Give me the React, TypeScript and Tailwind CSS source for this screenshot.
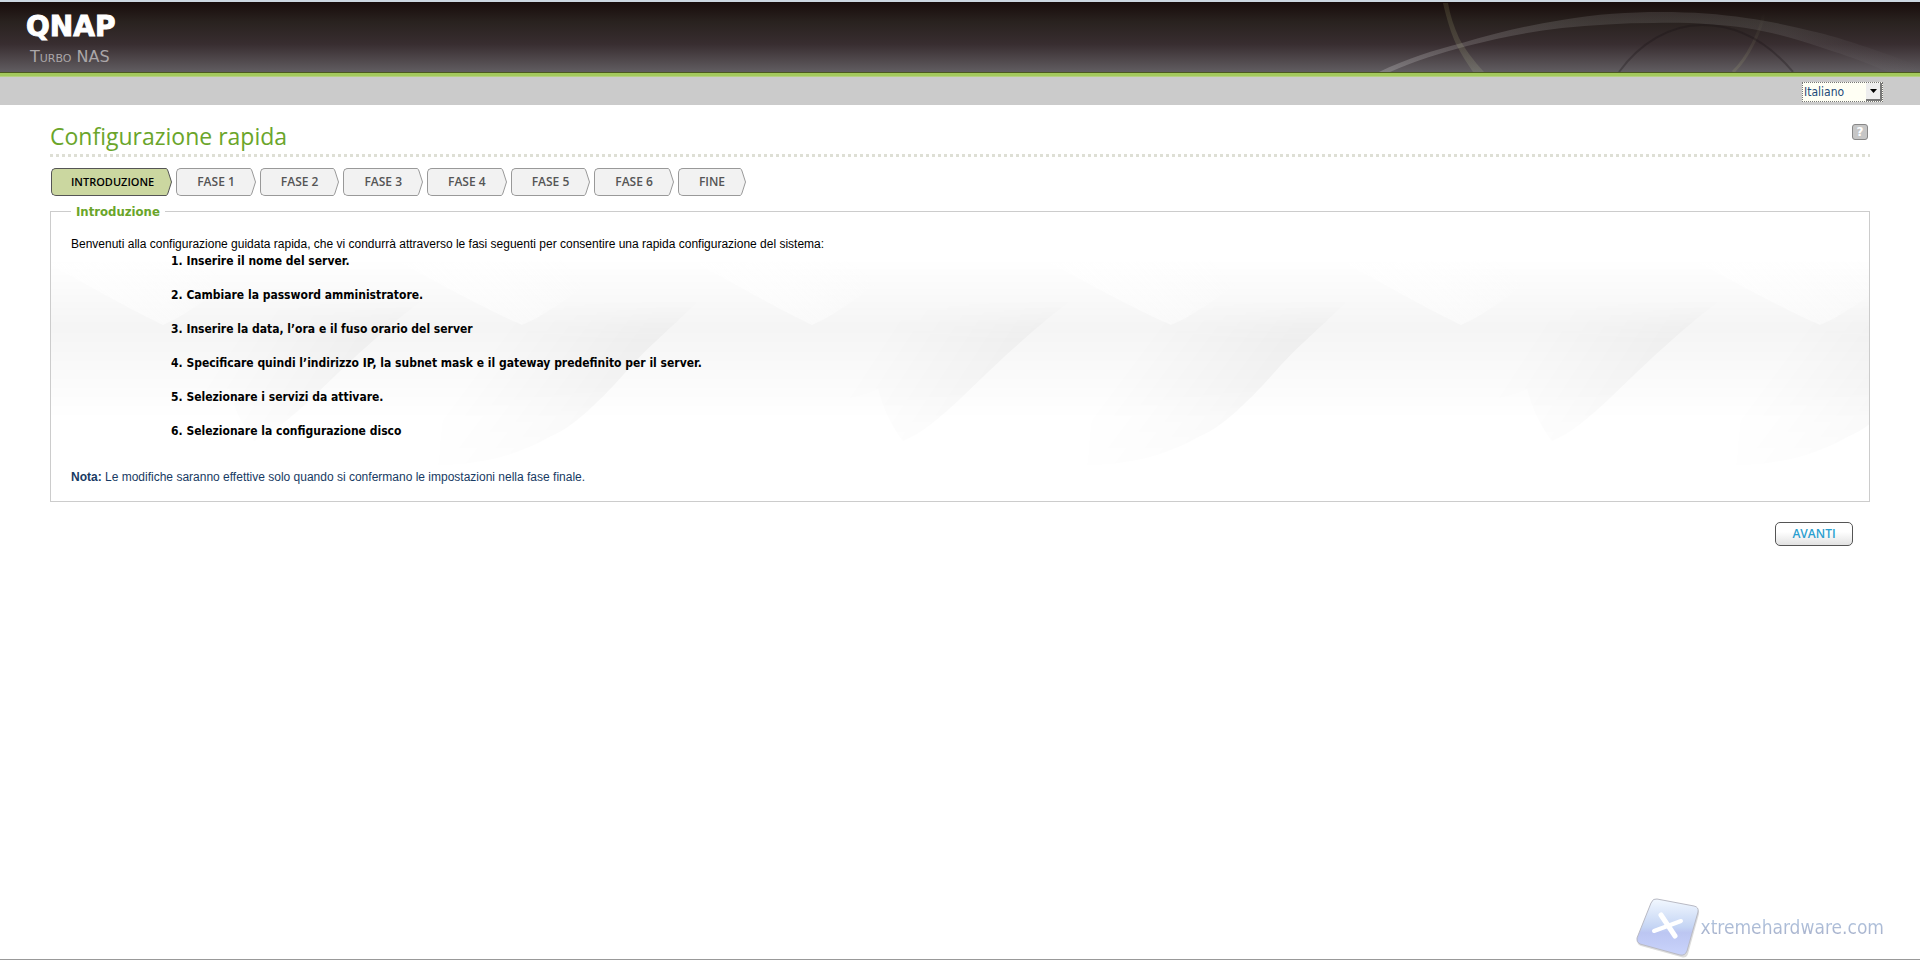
import { clsx } from 'clsx';

type Step = {
  id: string;
  label: string;
};

const steps: Step[] = [
  { id: 'intro', label: 'INTRODUZIONE' },
  { id: 'step-1', label: 'FASE 1' },
  { id: 'step-2', label: 'FASE 2' },
  { id: 'step-3', label: 'FASE 3' },
  { id: 'step-4', label: 'FASE 4' },
  { id: 'step-5', label: 'FASE 5' },
  { id: 'step-6', label: 'FASE 6' },
  { id: 'finish', label: 'FINE' },
];

const tasks = [
  'Inserire il nome del server.',
  'Cambiare la password amministratore.',
  'Inserire la data, l’ora e il fuso orario del server',
  'Specificare quindi l’indirizzo IP, la subnet mask e il gateway predefinito per il server.',
  'Selezionare i servizi da attivare.',
  'Selezionare la configurazione disco',
];

function HeaderArcs() {
  return (
    <svg className="absolute top-0 right-0 h-[70px] w-[580px]" viewBox="0 2 580 70" aria-hidden="true">
      <defs>
        <linearGradient id="arc" x1="0" x2="1" y1="0" y2="0">
          <stop offset="0" stopColor="#fff" stopOpacity="0.2" />
          <stop offset="0.4" stopColor="#bbb" stopOpacity="0.15" />
          <stop offset="0.75" stopColor="#aaa" stopOpacity="0.15" />
          <stop offset="1" stopColor="#999" stopOpacity="0" />
        </linearGradient>
        <linearGradient id="olive" x1="0" x2="0" y1="0" y2="1">
          <stop offset="0" stopColor="#8a8458" stopOpacity="0.22" />
          <stop offset="1" stopColor="#a8b090" stopOpacity="0.22" />
        </linearGradient>
        <linearGradient id="olive-thin" x1="0" x2="0" y1="0" y2="1">
          <stop offset="0" stopColor="#a8a878" stopOpacity="0" />
          <stop offset="1" stopColor="#a8a878" stopOpacity="0.2" />
        </linearGradient>
      </defs>
      <path
        d="M39 72 C66 59 94 50 122 43 C156 33 188 25 222 20 C256 14 290 12 321 12 C352 12 380 14 406 18 C435 22 455 27 480 33 C507 40 530 48 580 66 L580 84 C560 77 548 72 536 67 C515 58 498 53 480 47 C455 39 432 32 406 28 C378 24 345 22 314 23 C282 23 252 25 222 28 C188 32 158 38 127 46 C100 53 75 61 50 72 Z"
        fill="url(#arc)"
      />
      <path d="M103 3 C107 20 111 33 116 44 C121 54 127 63 133 72 L144 72 C133 60 125 49 119 38 C114 27 110 15 108 3 Z" fill="url(#olive)" />
      <path d="M424 13 C421 30 408 58 393 72" fill="none" stroke="url(#olive-thin)" strokeWidth="3" />
      <path d="M279 72 C300 43 330 25 362 25 C397 25 428 42 453 72" fill="none" stroke="#181014" strokeOpacity="0.3" strokeWidth="2" />
    </svg>
  );
}

function WaveBackground() {
  return (
    <svg className="absolute inset-0 h-full w-full" aria-hidden="true">
      <defs>
        <linearGradient id="band" x1="0" x2="0" y1="40" y2="200" gradientUnits="userSpaceOnUse">
          <stop offset="0" stopColor="#000" stopOpacity="0" />
          <stop offset="0.42" stopColor="#000" stopOpacity="0.04" />
          <stop offset="0.6" stopColor="#000" stopOpacity="0.028" />
          <stop offset="1" stopColor="#000" stopOpacity="0" />
        </linearGradient>
        <linearGradient id="notch" x1="0" x2="1" y1="0.3" y2="0">
          <stop offset="0" stopColor="#fff" stopOpacity="0.6" />
          <stop offset="0.4" stopColor="#fff" stopOpacity="0.45" />
          <stop offset="0.75" stopColor="#fff" stopOpacity="0" />
        </linearGradient>
        <linearGradient id="sweep-left" x1="180" x2="310" y1="90" y2="175" gradientUnits="userSpaceOnUse">
          <stop offset="0.1" stopColor="#000" stopOpacity="0" />
          <stop offset="0.9" stopColor="#000" stopOpacity="0.03" />
        </linearGradient>
        <linearGradient id="sweep-right" x1="440" x2="560" y1="100" y2="190" gradientUnits="userSpaceOnUse">
          <stop offset="0.1" stopColor="#000" stopOpacity="0" />
          <stop offset="0.9" stopColor="#000" stopOpacity="0.032" />
        </linearGradient>
        <linearGradient id="fade" x1="0" x2="0" y1="80" y2="250" gradientUnits="userSpaceOnUse">
          <stop offset="0" stopColor="#000" />
          <stop offset="0.25" stopColor="#fff" />
          <stop offset="0.5" stopColor="#fff" />
          <stop offset="1" stopColor="#555" />
        </linearGradient>
        <mask id="sweep-mask" maskUnits="userSpaceOnUse" x="0" y="0" width="649" height="282">
          <rect width="649" height="282" fill="url(#fade)" />
        </mask>
        <pattern id="waves" width="649" height="282" patternUnits="userSpaceOnUse">
          <rect y="40" width="649" height="160" fill="url(#band)" />
          <path d="M-4 44 C30 62 75 88 112 106 C140 94 175 66 210 40 Z" fill="url(#notch)" />
          <path d="M350 44 C388 64 430 88 471 106 C500 94 535 66 570 40 Z" fill="url(#notch)" />
          <g mask="url(#sweep-mask)">
            <path d="M90 80 L373 80 C330 112 300 142 263 177 C240 199 222 214 203 222 C190 205 184 190 178 170 C155 180 130 184 101 186 Z" fill="url(#sweep-left)" />
            <path d="M400 80 L649 80 C630 100 600 125 580 147 C560 170 525 208 500 217 C467 236 430 246 387 246 C390 226 395 160 400 80 Z" fill="url(#sweep-right)" />
          </g>
        </pattern>
      </defs>
      <rect width="100%" height="100%" fill="url(#waves)" />
    </svg>
  );
}

function StepTab({ step, active }: { step: Step; active: boolean }) {
  return (
    <button
      type="button"
      aria-current={active ? 'step' : undefined}
      className={clsx(
        "flex h-7 font-['Open_Sans',sans-serif] font-semibold",
        active ? 'text-[11px] text-black' : 'text-xs text-[#555]',
      )}
    >
      <span
        className={clsx(
          'flex h-7 items-center rounded-l-[5px] border-y border-l',
          active ? 'border-[#555] bg-[#cbd7a0] pr-3 pl-[19px]' : 'border-[#999] bg-[#f2f2f2] pr-[15px] pl-5',
        )}
      >
        {step.label}
      </span>
      <svg className="h-7 w-[6px]" viewBox="0 0 6 28" aria-hidden="true">
        <path
          d="M0 0.5 C1 0.5 1.3 1.5 2 3 L5.5 14 L2 25 C1.3 26.5 1 27.5 0 27.5"
          fill={active ? '#cbd7a0' : '#f2f2f2'}
          stroke={active ? '#555' : '#999'}
        />
      </svg>
    </button>
  );
}

function Watermark() {
  return (
    <div className="flex items-center">
      <svg className="h-[62px] w-[66px]" viewBox="0 0 66 62" aria-hidden="true">
        <defs>
          <linearGradient id="tile" x1="0" x2="0" y1="0" y2="1">
            <stop offset="0" stopColor="#f2f8ff" />
            <stop offset="0.5" stopColor="#c5d5f4" />
            <stop offset="0.6" stopColor="#bcc6f2" />
            <stop offset="1" stopColor="#c9d3fb" />
          </linearGradient>
        </defs>
        <path d="M23 4 L60 11 Q65 12 64 17 L53 57 Q51 62 46 60 L6 49 Q1 47 3 43 L17 8 Q19 3 23 4 Z" fill="#ddd" />
        <path d="M22 2 L59 9 Q64 10 63 15 L52 54 Q50 59 45 58 L5 47 Q1 45 2 41 L16 6 Q18 1 22 2 Z" fill="url(#tile)" stroke="#b9bac4" />
        <path d="M26 18 L40 39" stroke="#fff" strokeWidth="5" strokeLinecap="round" />
        <path d="M46 24 L19 34" stroke="#fff" strokeWidth="4" strokeLinecap="round" />
      </svg>
      <span className="bg-gradient-to-b from-[#b4cbe6] to-[#a4aac4] bg-clip-text font-['DejaVu_Sans_Condensed',sans-serif] text-[19px] text-transparent">
        xtremehardware.com
      </span>
    </div>
  );
}

export default function App() {
  return (
    <div className="flex min-h-screen flex-col bg-white font-['Liberation_Sans',Arial,sans-serif] text-xs text-black">
      <header className="border-t-2 border-[#ccd6e0]">
        <div className="relative h-[70px] bg-[linear-gradient(#180c0b,#29221f_28%,#382d30_60%,#615d61)] pt-[11px] pl-[26px]">
          <HeaderArcs />
          <h1 className="font-['DejaVu_Sans',sans-serif] text-[28px] leading-7 font-bold text-white [-webkit-text-stroke:1px_white]">QNAP</h1>
          <p className="pt-[6px] pl-1 font-['DejaVu_Sans',sans-serif] text-base leading-5 text-[#aaa6a8] [font-variant:small-caps]">Turbo NAS</p>
        </div>
        <div className="h-[5px] border-t border-[#4c5a20] bg-[linear-gradient(#a3c95c_70%,#c3d69c)]" />
      </header>

      <div className="flex h-7 justify-end bg-[#cbcbcb] pt-[5px] pr-[37px]">
        <div className="relative h-5">
          <select
            aria-label="Lingua"
            className="block h-5 w-[81px] appearance-none border border-dotted border-[#777] bg-[#fffff4] pl-px font-['DejaVu_Sans_Condensed',sans-serif] text-xs leading-[18px] text-[#234a78]"
          >
            <option>Italiano</option>
          </select>
          <span className="pointer-events-none absolute inset-y-px right-px flex w-4 items-center justify-center border-r-2 border-b-2 border-[#777] bg-[#eee]">
            <svg className="h-1 w-[7px]" viewBox="0 0 7 4" aria-hidden="true">
              <path d="M0 0 H7 L3.5 4 Z" />
            </svg>
          </span>
        </div>
      </div>

      <main className="px-[50px]">
        <div className="flex h-[49px] justify-between pt-[13px]">
          <h2 className="font-['Open_Sans',sans-serif] text-[23px] leading-9 text-[#6aa52a]">Configurazione rapida</h2>
          <button
            type="button"
            aria-label="Guida"
            className="mt-[6px] mr-[2px] flex size-4 items-center justify-center rounded-[3px] border border-[#888] bg-[#c6c6c6] font-['DejaVu_Sans',sans-serif] text-xs leading-none font-bold text-white"
          >
            ?
          </button>
        </div>
        <div className="h-[3px] bg-[repeating-linear-gradient(90deg,#dedfd5_0_3px,transparent_3px_6px)]" />

        <nav className="flex gap-1 pt-[11px] pl-px">
          {steps.map((step, index) => (
            <StepTab key={step.id} step={step} active={index === 0} />
          ))}
        </nav>

        <fieldset className="mt-2 border border-[#ccc]">
          <legend className="ml-5 px-[5px] font-['DejaVu_Sans_Condensed',sans-serif] text-[13px] leading-[15px] font-bold text-[#6aa52a]">
            Introduzione
          </legend>
          <div className="relative">
            <WaveBackground />
            <div className="relative px-5 pt-[17px] pb-[15px] leading-[17px]">
              <p>
                Benvenuti alla configurazione guidata rapida, che vi condurrà attraverso le fasi seguenti per consentire una rapida
                configurazione del sistema:
              </p>
              <ol className="flex flex-col gap-[17px] pl-[100px] font-['DejaVu_Sans_Condensed',sans-serif] font-bold">
                {tasks.map((task, index) => (
                  <li key={task}>
                    {index + 1}. {task}
                  </li>
                ))}
              </ol>
              <p className="pt-[29px] text-[#173a63]">
                <b>Nota:</b> Le modifiche saranno effettive solo quando si confermano le impostazioni nella fase finale.
              </p>
            </div>
          </div>
        </fieldset>

        <div className="flex justify-end pt-5 pr-[17px]">
          <button
            type="button"
            className="h-6 w-[78px] rounded-[5px] border border-[#555] bg-[linear-gradient(#fff_40%,#e2e2e2)] font-['Open_Sans',sans-serif] text-xs font-semibold text-[#2a9fd0]"
          >
            AVANTI
          </button>
        </div>
      </main>

      <footer className="mt-auto">
        <div className="flex justify-end border-b border-[#999] pr-9">
          <Watermark />
        </div>
        <div className="h-px" />
      </footer>
    </div>
  );
}
